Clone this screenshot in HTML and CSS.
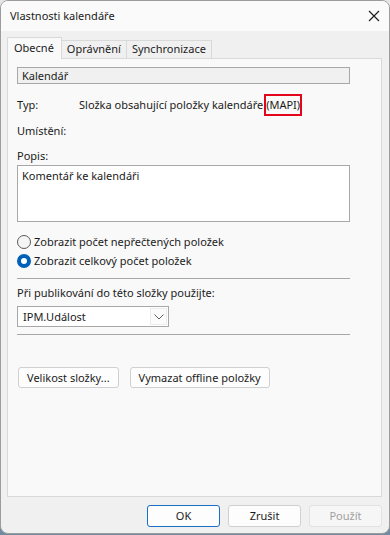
FILE: index.html
```html
<!DOCTYPE html>
<html lang="cs">
<head>
    <meta charset="UTF-8">
    <meta name="viewport" content="width=device-width, initial-scale=1.0">
    <title>Vlastnosti kalendáře</title>
    <link rel="stylesheet" href="styles.css">
</head>
<body>
    <!-- Okno dialogu -->
    <div class="window">
        <div class="titlebar">
            <span class="title">Vlastnosti kalendáře</span>
            <svg class="close" width="12" height="12" viewBox="0 0 12 12">
                <path d="M1 1 L11 11 M11 1 L1 11" stroke="#1a1a1a" stroke-width="1.1" fill="none"/>
            </svg>
        </div>

        <div class="body">
            <!-- Záložky -->
            <div class="tabs">
                <div class="tab active">Obecné</div>
                <div class="tab">Oprávnění</div>
                <div class="tab">Synchronizace</div>
            </div>

            <div class="panel">
                <div class="name-field">Kalendář</div>

                <div class="row row-type">
                    <span class="label">Typ:</span>
                    <span class="value">Složka obsahující položky kalendáře <span class="mark">(MAPI)</span></span>
                </div>
                <div class="row row-place">
                    <span class="label">Umístění:</span>
                </div>

                <div class="row row-desc">Popis:</div>
                <div class="memo">Komentář ke kalendáři</div>

                <div class="radios">
                    <div class="radio-row"><span class="radio"></span>Zobrazit počet nepřečtených položek</div>
                    <div class="radio-row"><span class="radio checked"></span>Zobrazit celkový počet položek</div>
                </div>

                <div class="divider"></div>

                <div class="row row-publish">Při publikování do této složky použijte:</div>
                <div class="select">
                    <span>IPM.Událost</span>
                    <span class="select-btn">
                        <svg width="10" height="6" viewBox="0 0 10 6">
                            <path d="M0.5 0.5 L5 5 L9.5 0.5" stroke="#606060" stroke-width="1" fill="none"/>
                        </svg>
                    </span>
                </div>

                <div class="divider divider-low"></div>

                <div class="actions">
                    <button class="btn">Velikost složky...</button>
                    <button class="btn">Vymazat offline položky</button>
                </div>
            </div>

            <!-- Tlačítka dialogu -->
            <div class="footer">
                <button class="btn dlg default">OK</button>
                <button class="btn dlg">Zrušit</button>
                <button class="btn dlg disabled">Použít</button>
            </div>
        </div>
    </div>
</body>
</html>
```

FILE: styles.css
```css
/* Základ */
body {
    margin: 0;
    padding: 0;
    width: 390px;
    height: 535px;
    background: linear-gradient(#e6e6e6 0%, #d8dde2 60%, #6f8aa1 100%);
    font-family: "Noto Sans", "Open Sans", sans-serif;
    font-size: 11px;
    color: #1b1b1b;
    overflow: hidden;
}

.window {
    box-sizing: border-box;
    width: 390px;
    height: 534px;
    border: 1px solid #9c9c9c;
    border-radius: 8px;
    background-color: #f0f0f0;
    overflow: hidden;
    display: flex;
    flex-direction: column;
}

/* Titulek */
.titlebar {
    height: 30px;
    flex-shrink: 0;
    background-color: #fafafa;
    display: flex;
    align-items: center;
    justify-content: space-between;
    padding: 0 7px 0 9px;
}

.title {
    line-height: 16px;
}

.close {
    margin-right: 2px;
}

.body {
    flex: 1;
    display: flex;
    flex-direction: column;
    padding: 6px 7px 0 6px;
}

/* Záložky */
.tabs {
    display: flex;
    align-items: flex-end;
    height: 21px;
    position: relative;
    z-index: 1;
}

.tab {
    box-sizing: border-box;
    height: 18px;
    line-height: 15px;
    padding: 0 5px;
    border: 1px solid #d9d9d9;
    border-bottom: none;
    border-left: none;
    background-color: #f0f0f0;
}

.tab.active {
    height: 22px;
    margin-bottom: -1px;
    line-height: 20px;
    padding: 0 7px 0 6px;
    border-left: 1px solid #d9d9d9;
    background-color: #f9f9f9;
}

.panel {
    box-sizing: border-box;
    height: 439px;
    border: 1px solid #d9d9d9;
    background-color: #f9f9f9;
    padding: 8px 31px 0 9px;
}

.name-field {
    box-sizing: border-box;
    height: 17px;
    line-height: 15px;
    padding-left: 4px;
    border: 1px solid #a8a8a8;
    background-color: #f0f0f0;
}

.row {
    line-height: 16px;
    display: flex;
}

.row-type {
    margin-top: 13px;
}

.row-place {
    margin-top: 10px;
}

.row-desc {
    margin-top: 9px;
}

.label {
    width: 62px;
    flex-shrink: 0;
}

.mark {
    padding: 1px 0 2px;
    outline: 2px solid #e3051b;
    outline-offset: 0;
}

.memo {
    box-sizing: border-box;
    height: 57px;
    margin-top: 1px;
    padding: 2px 4px;
    line-height: 16px;
    border: 1px solid #a8a8a8;
    background-color: #fff;
}

/* Přepínače */
.radios {
    margin-top: 10px;
}

.radio-row {
    display: flex;
    align-items: center;
    height: 19px;
    line-height: 16px;
}

.radio {
    box-sizing: border-box;
    width: 14px;
    height: 14px;
    border-radius: 50%;
    border: 1px solid #5a5a5a;
    background-color: #f5f5f5;
    margin-right: 3px;
}

.radio.checked {
    border: 4px solid #005fb8;
    background-color: #fff;
}

.divider {
    height: 1px;
    background-color: #a8a8a8;
    margin-top: 8px;
}

.row-publish {
    margin-top: 6px;
}

/* Rozbalovací seznam */
.select {
    box-sizing: border-box;
    width: 152px;
    height: 21px;
    margin-top: 5px;
    border: 1px solid #a8a8a8;
    background-color: #fff;
    display: flex;
    align-items: center;
    justify-content: space-between;
    padding: 0 1px 0 5px;
    line-height: 16px;
}

.select-btn {
    box-sizing: border-box;
    width: 17px;
    height: 17px;
    border: 1px solid #ececec;
    background-color: #fbfbfb;
    display: flex;
    align-items: center;
    justify-content: center;
}

.divider-low {
    margin-top: 7px;
}

/* Tlačítka */
.btn {
    box-sizing: border-box;
    height: 21px;
    padding: 0 8px;
    font-family: inherit;
    font-size: 11px;
    line-height: 16px;
    color: #1b1b1b;
    border: 1px solid #d0d0d0;
    border-radius: 3px;
    background-color: #fdfdfd;
}

.actions {
    display: flex;
    gap: 11px;
    margin-top: 32px;
    padding-left: 1px;
}

.footer {
    display: flex;
    justify-content: flex-end;
    gap: 8px;
    padding-top: 8px;
}

.btn.dlg {
    width: 73px;
    height: 22px;
}

.btn.default {
    border-color: #1a6fc4;
}

.btn.disabled {
    color: #a0a0a0;
    border-color: #e2e2e2;
    background-color: #f6f6f6;
}
```
